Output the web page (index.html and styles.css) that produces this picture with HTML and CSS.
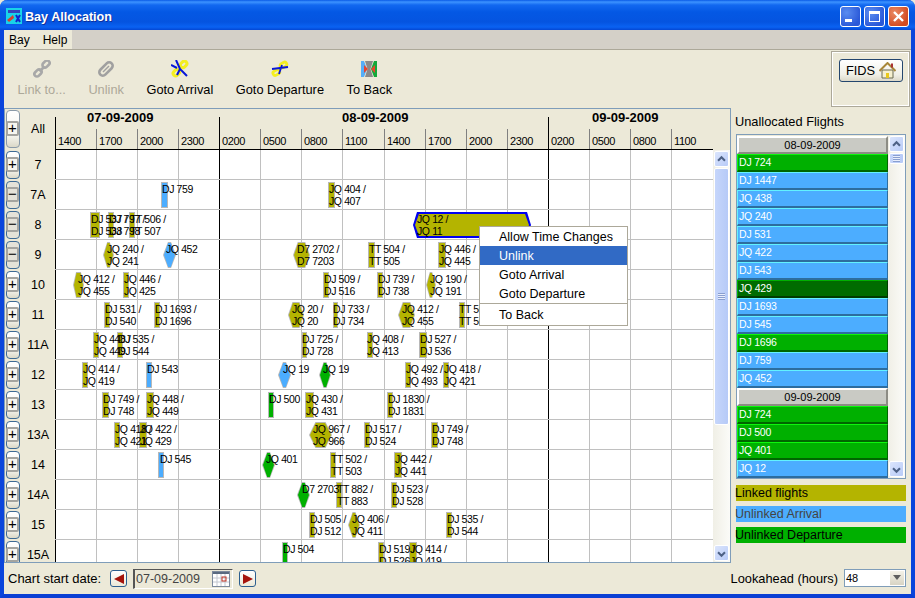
FILE: index.html
```html
<!DOCTYPE html>
<html>
<head>
    <meta charset="utf-8">
    <title>Bay Allocation</title>
    <link rel="stylesheet" href="styles.css">
</head>
<body>
<svg class="defs" width="0" height="0">
    <symbol id="up" viewBox="0 0 15 15"><path d="M3.5 9 L7.5 5 L11.5 9" fill="none" stroke="#4d6185" stroke-width="2.4"/></symbol>
    <symbol id="down" viewBox="0 0 15 15"><path d="M3.5 6 L7.5 10 L11.5 6" fill="none" stroke="#4d6185" stroke-width="2.4"/></symbol>
</svg>
<div id="win">
    <div id="titlebar">
        <svg class="appicon" width="16" height="16" viewBox="0 0 16 16">
            <rect width="16" height="16" fill="#19d3e8"/>
            <rect x="2" y="2" width="12" height="3" fill="#3344bb"/>
            <path d="M1 12 L7 7 L8 10 L3 14 Z" fill="#d8402a"/>
            <path d="M10 7 L14 14 M14 7 L10 14" stroke="#1122cc" stroke-width="2"/>
        </svg>
        <span class="title">Bay Allocation</span>
        <div class="winbtns">
            <div class="winbtn"><span class="min-mark"></span></div>
            <div class="winbtn"><span class="max-mark"></span></div>
            <div class="winbtn close">
                <svg width="13" height="13" viewBox="0 0 13 13"><path d="M2 2 L11 11 M11 2 L2 11" stroke="#fff" stroke-width="2.4"/></svg>
            </div>
        </div>
    </div>

    <div id="menubar">
        <div class="menus"><span>Bay</span><span>Help</span></div>
    </div>

    <div id="toolbar">
        <div class="tool disabled">
            <svg width="18" height="18" viewBox="0 0 18 18">
                <g fill="none" stroke="#a8a8a8" stroke-width="2.6">
                    <rect x="9" y="1.5" width="8" height="5" rx="2.5" transform="rotate(-45 13 4)"/>
                    <rect x="1" y="10.5" width="8" height="5" rx="2.5" transform="rotate(-45 5 13)"/>
                    <path d="M6.5 11.5 L11.5 6.5"/>
                </g>
            </svg>
            <span>Link to...</span>
        </div>
        <div class="tool disabled">
            <svg width="18" height="18" viewBox="0 0 18 18">
                <rect x="1" y="5.5" width="16" height="7" rx="3.5" transform="rotate(-45 9 9)" fill="none" stroke="#a0a0a0" stroke-width="2.6"/>
                <path d="M6 12 L12 6" stroke="#a0a0a0" stroke-width="1.4"/>
            </svg>
            <span>Unlink</span>
        </div>
        <div class="tool">
            <svg width="18" height="18" viewBox="0 0 18 18">
                <g fill="none" stroke="#f4ee20" stroke-width="3">
                    <rect x="9" y="1.5" width="7" height="5" rx="2.5" transform="rotate(-45 13 4)"/>
                    <rect x="2" y="10.5" width="7" height="5" rx="2.5" transform="rotate(-45 5 13)"/>
                </g>
                <path d="M5 0 L9 9 L16 16 M0 5 L6 8 M9 9 L6 15" fill="none" stroke="#0816d8" stroke-width="2"/>
            </svg>
            <span>Goto Arrival</span>
        </div>
        <div class="tool">
            <svg width="18" height="18" viewBox="0 0 18 18">
                <g fill="none" stroke="#f4ee20" stroke-width="2.8">
                    <rect x="9" y="2.5" width="7" height="4.5" rx="2.2" transform="rotate(-30 13 5)"/>
                    <rect x="2" y="10.5" width="7" height="4.5" rx="2.2" transform="rotate(-30 5 13)"/>
                </g>
                <path d="M1 9 L17 7 M8 14 L11 5" fill="none" stroke="#0816d8" stroke-width="1.8"/>
            </svg>
            <span>Goto Departure</span>
        </div>
        <div class="tool">
            <svg width="18" height="18" viewBox="0 0 18 18">
                <path d="M1 1 L4 1 L7 9 L4 17 L1 17 Z" fill="#55aef8"/>
                <path d="M17 1 L14 1 L11 9 L14 17 L17 17 Z" fill="#14a83a"/>
                <path d="M5 1 L13 1 L10.5 9 L13 17 L5 17 L7.5 9 Z" fill="#8a8a8a"/>
                <path d="M4 5 L8 9 L4 13 Z" fill="#e8452c"/>
                <path d="M15 5 L11 9 L15 13 Z" fill="#e8452c"/>
            </svg>
            <span>To Back</span>
        </div>
        <div class="fids-box">
            <div class="fids-btn">FIDS
                <svg width="17" height="17" viewBox="0 0 17 17">
                    <path d="M3 8 L3 16 L14 16 L14 8 Z" fill="#f6f0cf" stroke="#6b6b50"/>
                    <path d="M0.5 9 L8.5 1 L16.5 9" fill="none" stroke="#a8873a" stroke-width="2"/>
                    <rect x="12" y="1.5" width="2" height="4" fill="#a33"/>
                    <rect x="7" y="11" width="3" height="5" fill="#e8c81a"/>
                </svg>
            </div>
        </div>
    </div>

    <div id="main">
        <div id="chart">
            <div class="chart-head">
                <div class="bay-cell head-cell">
                    <div class="expander tall"><span class="sign">+</span></div>
                    <span class="bay-name">All</span>
                </div>
                <div class="timeline">
                    <div class="days">
                        <div class="day first">07-09-2009</div>
                        <div class="day second">08-09-2009</div>
                        <div class="day third">09-09-2009</div>
                    </div>
                    <div class="hours" id="hours"></div>
                </div>
            </div>
            <div class="chart-body">
                <div class="rows" id="rows"></div>
                <div class="vscroll">
                    <div class="sb-btn"><svg width="15" height="15"><use href="#up"/></svg></div>
                    <div class="sb-track">
                        <div class="sb-thumb big"><span class="grip"></span></div>
                    </div>
                    <div class="sb-btn"><svg width="15" height="15"><use href="#down"/></svg></div>
                </div>
            </div>
        </div>

        <div id="side">
            <div class="side-title">Unallocated Flights</div>
            <div class="flight-list">
                <div class="list-items">
                    <div class="list-head">08-09-2009</div>
                    <div class="item dep">DJ 724</div>
                    <div class="item arr">DJ 1447</div>
                    <div class="item arr">JQ 438</div>
                    <div class="item arr">JQ 240</div>
                    <div class="item arr">DJ 531</div>
                    <div class="item arr">JQ 422</div>
                    <div class="item arr">DJ 543</div>
                    <div class="item sel">JQ 429</div>
                    <div class="item arr">DJ 1693</div>
                    <div class="item arr">DJ 545</div>
                    <div class="item dep">DJ 1696</div>
                    <div class="item arr">DJ 759</div>
                    <div class="item arr">JQ 452</div>
                    <div class="list-head">09-09-2009</div>
                    <div class="item dep">DJ 724</div>
                    <div class="item dep">DJ 500</div>
                    <div class="item dep">JQ 401</div>
                    <div class="item arr">JQ 12</div>
                    <div class="item arr"></div>
                </div>
                <div class="vscroll small">
                    <div class="sb-btn"><svg width="15" height="15"><use href="#up"/></svg></div>
                    <div class="sb-track">
                        <div class="sb-thumb tiny"><span class="grip"></span></div>
                    </div>
                    <div class="sb-btn"><svg width="15" height="15"><use href="#down"/></svg></div>
                </div>
            </div>
            <div class="legend linked">Linked flights</div>
            <div class="legend arrival">Unlinked Arrival</div>
            <div class="legend departure">Unlinked Departure</div>
        </div>
    </div>

    <div id="footer">
        <span class="start-label">Chart start date:</span>
        <div class="nav-btn"><span class="tri left"></span></div>
        <div class="date-box">
            <span>07-09-2009</span>
            <svg width="18" height="16" viewBox="0 0 18 16">
                <rect x="0.5" y="0.5" width="17" height="15" fill="#fff" stroke="#7d8a9c"/>
                <rect x="1" y="1" width="16" height="2" fill="#5a6a80"/>
                <path d="M1 7 H17 M1 11 H17 M5 3 V15 M9 3 V15 M13 3 V15" stroke="#c4c8d0"/>
                <rect x="10" y="6" width="4" height="4" fill="none" stroke="#c03020"/>
            </svg>
        </div>
        <div class="nav-btn"><span class="tri right"></span></div>
        <span class="look-label">Lookahead (hours)</span>
        <div class="combo">
            <span class="combo-val">48</span>
            <span class="combo-btn"><span class="combo-arrow"></span></span>
        </div>
    </div>

    <div id="ctxmenu">
        <div class="ctx-item">Allow Time Changes</div>
        <div class="ctx-item on">Unlink</div>
        <div class="ctx-item">Goto Arrival</div>
        <div class="ctx-item">Goto Departure</div>
        <div class="ctx-sep"></div>
        <div class="ctx-item">To Back</div>
    </div>
</div>
<script src="chart.js"></script>
</body>
</html>
```

FILE: styles.css
```css
* {
    box-sizing: border-box;
}
html, body {
    margin: 0;
    padding: 0;
    width: 915px;
    height: 598px;
    overflow: hidden;
    background: #ece9d8;
}
body {
    font-family: "Liberation Sans", Arial, sans-serif;
    font-size: 12.8px;
    color: #000;
}
.defs {
    position: absolute;
}
#win {
    position: relative;
    width: 915px;
    height: 598px;
    display: flex;
    flex-direction: column;
    background: #ece9d8;
    border-left: 4px solid #0a45dc;
    border-right: 4px solid #0a45dc;
    border-bottom: 4px solid #0a3fd4;
    border-radius: 7px 7px 0 0;
}

/* title bar */
#titlebar {
    height: 30px;
    margin: 0 -4px;
    padding: 2px 6px 0;
    display: flex;
    align-items: center;
    flex: none;
    border-radius: 7px 7px 0 0;
    background: linear-gradient(to bottom, #0a5ae6 0, #3d93ff 2px, #1268f0 5px, #0458e4 12px, #0554e0 22px, #0a62f2 27px, #0447d4 30px);
}
.appicon {
    margin-right: 3px;
}
.title {
    color: #fff;
    font-weight: bold;
    font-size: 12.6px;
    padding-top: 2px;
    text-shadow: 1px 1px 0 #0f2f9a;
}
.winbtns {
    margin-left: auto;
    display: flex;
    gap: 3px;
}
.winbtn {
    position: relative;
    width: 21px;
    height: 21px;
    border: 1px solid #fff;
    border-radius: 3px;
    background: radial-gradient(circle at 30% 30%, #5a8cf0, #2a58d8 75%);
    display: flex;
    align-items: center;
    justify-content: center;
}
.winbtn.close {
    background: radial-gradient(circle at 30% 30%, #ea8a64, #d34a20 75%);
}
.min-mark {
    width: 7px;
    height: 3px;
    background: #fff;
    margin: 8px 5px 0 0;
}
.max-mark {
    width: 11px;
    height: 11px;
    border: 1px solid #fff;
    border-top-width: 3px;
}

/* menu */
#menubar {
    height: 20px;
    flex: none;
    background: #d4d0c8;
    border-bottom: 1px solid #aca899;
}
.menus {
    width: 68px;
    height: 19px;
    background: #ece9d8;
    display: flex;
    align-items: center;
    gap: 13px;
    padding-left: 5px;
    font-size: 12px;
}

/* toolbar */
#toolbar {
    height: 58px;
    flex: none;
    display: flex;
    align-items: flex-start;
    gap: 22.5px;
    padding: 10px 0 0 13.5px;
    position: relative;
}
.tool {
    display: flex;
    flex-direction: column;
    align-items: center;
    gap: 4px;
}
.tool.disabled {
    color: #aca899;
}
.fids-box {
    width: 79px;
    height: 56px;
    margin: -9px 1px 0 auto;
    border: 1px solid #aca899;
    outline: 1px solid #fff;
    outline-offset: -2px;
    padding: 7px 0 0 7px;
}
.fids-btn {
    width: 64px;
    height: 23px;
    border: 1px solid #24466e;
    border-radius: 3px;
    background: linear-gradient(to bottom, #fff, #f0efe6 70%, #dcd8c8);
    display: flex;
    align-items: center;
    justify-content: center;
    gap: 4px;
}

/* chart */
#main {
    flex: 1;
    display: flex;
    min-height: 0;
}
#chart {
    width: 727px;
    height: 455px;
    border: 1px solid #7f9db9;
    display: flex;
    flex-direction: column;
    flex: none;
}
.chart-head {
    height: 41px;
    flex: none;
    display: flex;
}
.bay-cell {
    width: 50px;
    flex: none;
    display: flex;
    align-items: center;
    position: relative;
    padding-left: 1px;
}
.head-cell {
    height: 40px;
}
.bay-name {
    flex: 1;
    text-align: center;
    font-size: 12.5px;
    padding-left: 1px;
}
.expander {
    width: 14px;
    height: 28px;
    flex: none;
    display: flex;
    align-items: center;
    border: 1px solid #3d6a94;
    border-radius: 4px;
    background: linear-gradient(to bottom, #fff, #f4f3ec 70%, #dbd8c8);
}
.expander.tall {
    height: 38px;
    border-color: #8a9aa8;
}
.sign {
    display: block;
    width: 14px;
    height: 15px;
    margin-left: -1px;
    border: 2px solid #a4a4a0;
    border-radius: 2px;
    background: #f7f6f0;
    font-size: 15px;
    line-height: 10px;
    text-align: center;
}
.minus .expander {
    background: #e4e2d8;
}
.minus .sign {
    background: #e4e2d8;
}
.timeline {
    width: 658px;
    flex: none;
    border-bottom: 1px solid #000;
}
.days {
    height: 20px;
    display: grid;
    grid-template-columns: 164px 329px 165px;
    font-weight: bold;
    font-size: 13px;
}
.day {
    position: relative;
    line-height: 17px;
}
.day::before {
    content: "";
    position: absolute;
    left: 0;
    top: 8px;
    bottom: 0;
    width: 1px;
    background: #000;
}
.day.first {
    padding-left: 32px;
}
.day.second {
    padding-left: 123px;
}
.day.third {
    padding-left: 44px;
}
.hours {
    height: 20px;
    display: grid;
    grid-template-columns: repeat(7, 41px) 42px repeat(7, 41px) 42px;
}
.hour {
    border-left: 1px solid #808080;
    padding-left: 2px;
    font-size: 11px;
    letter-spacing: -0.4px;
    line-height: 25px;
    overflow: hidden;
}
.hour.daymark {
    border-left-color: #000;
}
.chart-body {
    flex: 1;
    min-height: 0;
    display: flex;
}
.rows {
    width: 708px;
    flex: none;
    overflow: hidden;
}
.row {
    height: 30px;
    display: flex;
}
.bay-cell .expander {
    margin-top: -1px;
}
.track {
    position: relative;
    width: 658px;
    flex: none;
    background: #fff;
    display: grid;
    grid-template-columns: repeat(7, 41px) 42px repeat(7, 41px) 42px;
    border-bottom: 1px solid #c0c0c0;
}
.cell {
    border-left: 1px solid #c0c0c0;
}
.cell.daymark {
    border-left-color: #000;
}

/* flight bars on the chart */
.flight {
    position: absolute;
    top: 2px;
    height: 26px;
}
.shape {
    position: absolute;
    inset: 0;
    background: #b8b8b8;
}
.shape::after {
    content: "";
    position: absolute;
    inset: 1px;
    background: inherit;
}
.shape.linked::after {
    background: #b4b400;
}
.shape.arrival::after {
    background: #4cadff;
}
.shape.departure::after {
    background: #00b000;
}
.shape.diamond, .shape.diamond::after {
    clip-path: polygon(38% 0, 62% 0, 100% 50%, 62% 100%, 38% 100%, 0 50%);
}
.shape.hex, .shape.hex::after {
    clip-path: polygon(28% 0, 72% 0, 100% 50%, 72% 100%, 28% 100%, 0 50%);
}
.shape.picked {
    background: #0000f0;
}
.shape.picked::after {
    inset: 2px;
}
.shape.picked, .shape.picked::after {
    clip-path: polygon(4px 0, calc(100% - 4px) 0, 100% 50%, calc(100% - 4px) 100%, 4px 100%, 0 50%);
}
.flight-label {
    position: absolute;
    top: 1px;
    z-index: 1;
    white-space: nowrap;
    font-size: 10.5px;
    letter-spacing: -0.4px;
    line-height: 12px;
}

/* scrollbars */
.vscroll {
    width: 17px;
    flex: none;
    display: flex;
    flex-direction: column;
    align-items: center;
    padding: 1px 0;
    background: linear-gradient(to right, #f0efe6, #fbfbf8);
}
.sb-btn {
    width: 15px;
    height: 16px;
    flex: none;
    border: 1px solid #fff;
    border-radius: 2px;
    background: linear-gradient(to bottom right, #dbe5fc, #b8cbf8);
    display: flex;
    align-items: center;
    justify-content: center;
}
.sb-track {
    flex: 1;
    width: 15px;
    padding-top: 1px;
}
.sb-thumb {
    border: 1px solid #fff;
    border-radius: 2px;
    background: linear-gradient(to right, #c6d6fb, #b6caf7);
    display: flex;
    align-items: center;
    justify-content: center;
}
.sb-thumb.big {
    height: 257px;
}
.sb-thumb.tiny {
    height: 11px;
}
.grip {
    display: block;
    width: 7px;
    height: 7px;
    background: repeating-linear-gradient(to bottom, #8a9fd0 0 1px, #e8eefc 1px 2px);
}

/* right side */
#side {
    width: 170px;
    margin-left: 5px;
    flex: none;
}
.side-title {
    height: 26px;
    line-height: 27px;
    margin-left: -1px;
}
.flight-list {
    height: 345px;
    display: flex;
    border: 1px solid #7f9db9;
}
.list-items {
    width: 151px;
    flex: none;
    overflow: hidden;
    padding-top: 1px;
}
.vscroll.small {
    flex: 1;
}
.list-head {
    height: 18px;
    border: 2px solid;
    border-color: #fff #8c8c84 #8c8c84 #fff;
    background: #c9cac4;
    text-align: center;
    font-size: 11px;
    line-height: 14px;
}
.item {
    height: 18px;
    border: 1px solid;
    border-width: 1px 1px 2px 1px;
    padding-left: 1px;
    color: #fff;
    font-size: 10.5px;
    letter-spacing: -0.2px;
    line-height: 15px;
}
.item.arr {
    background: #4cadff;
    border-color: #62f2ff #2d6d9f #2d6d9f #62f2ff;
}
.item.dep {
    background: #00b000;
    border-color: #0cf60c #006600 #006600 #0cf60c;
}
.item.sel {
    background: #006c00;
    border-color: #00b000 #003c00 #003c00 #00b000;
}
.legend {
    height: 16px;
    margin-top: 5px;
    line-height: 16px;
    font-size: 12.5px;
    text-indent: -1px;
}
.flight-list + .legend {
    margin-top: 6px;
}
.legend.linked {
    background: #b4b400;
}
.legend.arrival {
    background: #4cadff;
    color: #444;
}
.legend.departure {
    background: #00b000;
}

/* footer */
#footer {
    height: 31px;
    flex: none;
    display: flex;
    align-items: center;
    padding: 0 5px 0 4px;
}
.start-label {
    width: 102px;
    flex: none;
    font-size: 13px;
}
.nav-btn {
    width: 17px;
    height: 17px;
    border: 1px solid #2c5f8f;
    border-radius: 3px;
    background: linear-gradient(to bottom, #fff, #ece9d8);
    display: flex;
    align-items: center;
    justify-content: center;
    flex: none;
}
.tri {
    width: 0;
    height: 0;
    border-top: 5px solid transparent;
    border-bottom: 5px solid transparent;
}
.tri.left {
    border-right: 10px solid #a5140c;
}
.tri.right {
    border-left: 10px solid #a5140c;
}
.date-box {
    width: 100px;
    height: 20px;
    margin: 0 6px;
    flex: none;
    border-left: 2px solid #555;
    border-top: 1px solid #555;
    border-right: 1px solid #fff;
    border-bottom: 1px solid #fff;
    display: flex;
    align-items: center;
    justify-content: space-between;
    padding: 0 2px 0 1px;
    color: #444;
    font-size: 12.5px;
}
.look-label {
    margin-left: auto;
    margin-right: 6px;
    font-size: 12.8px;
}
.combo {
    width: 62px;
    height: 18px;
    margin-bottom: 2px;
    border: 1px solid #7f9db9;
    background: #fff;
    display: flex;
    align-items: center;
    justify-content: space-between;
    font-size: 11px;
    padding-left: 1px;
    flex: none;
}
.combo-btn {
    width: 16px;
    height: 16px;
    background: linear-gradient(to bottom, #f4f2e8, #d8d4c4);
    border: 1px solid #fff;
    display: flex;
    align-items: center;
    justify-content: center;
}
.combo-arrow {
    width: 0;
    height: 0;
    border-left: 4px solid transparent;
    border-right: 4px solid transparent;
    border-top: 5px solid #5e5e5e;
}

/* popup menu */
#ctxmenu {
    position: absolute;
    left: 475px;
    top: 226px;
    width: 149px;
    height: 100px;
    background: #fff;
    border: 1px solid #aca899;
    z-index: 10;
    font-size: 12.5px;
}
.ctx-item {
    height: 19px;
    line-height: 21px;
    padding-left: 19px;
}
.ctx-item.on {
    background: #316ac5;
    color: #fff;
}
.ctx-sep {
    height: 1px;
    margin: 0 0 1px;
    background: #aca899;
}
```

FILE: chart.js
```js
// kind, shape, left x, width, text x, label lines
// l = linked, a = unlinked arrival, d = unlinked departure
// r = rect, i = diamond, h = hex, p = picked
var bays = [
    {name: "7", flights: []},
    {name: "7A", minus: true, flights: [
        ["a","r",161,7,162,"DJ 759"],
        ["l","r",328,7,329,"JQ 404 /","JQ 407"]]},
    {name: "8", minus: true, flights: [
        ["l","r",90,10,91,"DJ 537 /","DJ 538"],
        ["l","r",108,6,109,"DJ 797 /","DJ 798"],
        ["l","r",129,6,130,"TT 506 /","TT 507"],
        ["l","p",413,118,417,"JQ 12 /","JQ 11"]]},
    {name: "9", minus: true, flights: [
        ["l","i",103,11,107,"JQ 240 /","JQ 241"],
        ["a","i",163,13,166,"JQ 452"],
        ["l","h",293,17,297,"D7 2702 /","D7 7203"],
        ["l","r",368,7,369,"TT 504 /","TT 505"],
        ["l","r",438,8,439,"JQ 446 /","JQ 445"]]},
    {name: "10", flights: [
        ["l","h",73,11,78,"JQ 412 /","JQ 455"],
        ["l","r",123,6,124,"JQ 446 /","JQ 425"],
        ["l","r",323,6,324,"DJ 509 /","DJ 516"],
        ["l","r",377,6,378,"DJ 739 /","DJ 738"],
        ["l","i",426,10,430,"JQ 190 /","JQ 191"]]},
    {name: "11", flights: [
        ["l","r",104,6,105,"DJ 531 /","DJ 540"],
        ["l","r",154,6,155,"DJ 1693 /","DJ 1696"],
        ["l","h",288,16,292,"JQ 20 /","JQ 20"],
        ["l","r",333,5,333,"DJ 733 /","DJ 734"],
        ["l","h",398,17,402,"JQ 412 /","JQ 455"],
        ["l","r",459,6,459,"TT 508 /","TT 509"]]},
    {name: "11A", flights: [
        ["l","r",93,6,94,"JQ 448 /","JQ 449"],
        ["l","r",117,6,118,"DJ 535 /","DJ 544"],
        ["l","r",302,5,302,"DJ 725 /","DJ 728"],
        ["l","r",367,6,367,"JQ 408 /","JQ 413"],
        ["l","r",419,8,420,"DJ 527 /","DJ 536"]]},
    {name: "12", flights: [
        ["l","r",82,6,83,"JQ 414 /","JQ 419"],
        ["a","r",146,6,147,"DJ 543"],
        ["a","i",278,13,283,"JQ 19"],
        ["d","i",319,12,323,"JQ 19"],
        ["l","r",405,6,406,"JQ 492 /","JQ 493"],
        ["l","r",443,6,444,"JQ 418 /","JQ 421"]]},
    {name: "13", flights: [
        ["l","r",102,7,103,"DJ 749 /","DJ 748"],
        ["l","r",146,8,147,"JQ 448 /","JQ 449"],
        ["d","r",268,6,269,"DJ 500"],
        ["l","r",305,9,306,"JQ 430 /","JQ 431"],
        ["l","r",387,6,388,"DJ 1830 /","DJ 1831"]]},
    {name: "13A", flights: [
        ["l","r",114,6,115,"JQ 418 /","JQ 421"],
        ["l","r",139,8,140,"JQ 422 /","JQ 429"],
        ["l","h",309,23,313,"JQ 967 /","JQ 966"],
        ["l","r",364,6,365,"DJ 517 /","DJ 524"],
        ["l","r",431,7,432,"DJ 749 /","DJ 748"]]},
    {name: "14", flights: [
        ["a","r",158,6,160,"DJ 545"],
        ["d","i",262,13,266,"JQ 401"],
        ["l","r",330,6,331,"TT 502 /","TT 503"],
        ["l","r",394,8,395,"JQ 442 /","JQ 441"]]},
    {name: "14A", flights: [
        ["d","i",297,13,302,"D7 2703"],
        ["l","r",336,6,337,"TT 882 /","TT 883"],
        ["l","r",391,6,392,"DJ 523 /","DJ 528"]]},
    {name: "15", flights: [
        ["l","r",309,6,310,"DJ 505 /","DJ 512"],
        ["l","i",348,12,352,"JQ 406 /","JQ 411"],
        ["l","r",446,6,447,"DJ 535 /","DJ 544"]]},
    {name: "15A", flights: [
        ["d","r",282,6,283,"DJ 504"],
        ["l","r",378,6,379,"DJ 519 /","DJ 526"],
        ["l","r",409,8,410,"JQ 414 /","JQ 419"]]}
];

var hourNames = ["1400","1700","2000","2300","0200","0500","0800","1100","1400","1700","2000","2300","0200","0500","0800","1100"];
var kinds = {l: "linked", a: "arrival", d: "departure"};
var shapes = {r: "", i: "diamond", h: "hex", p: "picked"};
var trackLeft = 55;

function isDayMark(i) {
    return i === 0 || i === 4 || i === 12;
}

var hoursHtml = "";
hourNames.forEach(function(h, i) {
    hoursHtml += `<div class="hour${isDayMark(i) ? " daymark" : ""}">${h}</div>`;
});
document.getElementById("hours").innerHTML = hoursHtml;

var out = "";
bays.forEach(function(bay) {
    var cells = "";
    hourNames.forEach(function(h, i) {
        cells += `<div class="cell${isDayMark(i) ? " daymark" : ""}"></div>`;
    });
    var bars = "";
    bay.flights.forEach(function(f) {
        var lines = f.slice(5).join("<br>");
        bars += `<div class="flight" style="left:${f[2] - trackLeft}px;width:${f[3]}px">` +
            `<div class="shape ${kinds[f[0]]} ${shapes[f[1]]}"></div>` +
            `<div class="flight-label" style="left:${f[4] - f[2]}px">${lines}</div></div>`;
    });
    out += `<div class="row${bay.minus ? " minus" : ""}">` +
        `<div class="bay-cell"><div class="expander"><span class="sign">${bay.minus ? "−" : "+"}</span></div>` +
        `<span class="bay-name">${bay.name}</span></div>` +
        `<div class="track">${cells}${bars}</div></div>`;
});
document.getElementById("rows").innerHTML = out;
```
